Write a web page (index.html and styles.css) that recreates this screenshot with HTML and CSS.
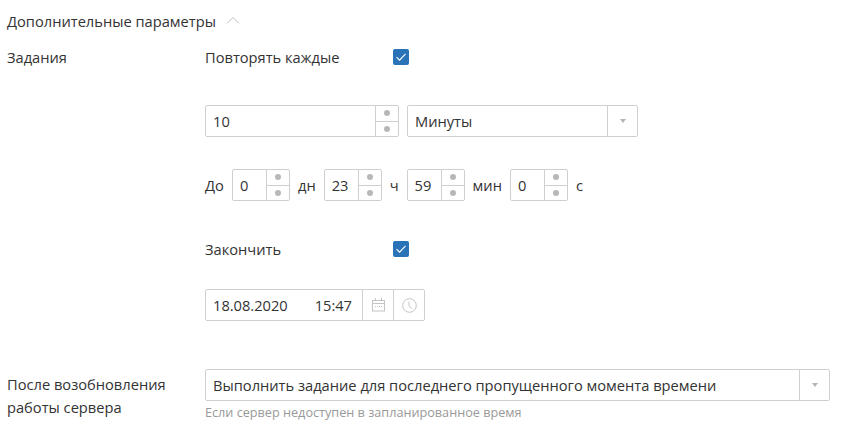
FILE: index.html
```html
<!DOCTYPE html>
<html lang="ru">
<head>
<meta charset="utf-8">
<title>Дополнительные параметры</title>
<link rel="stylesheet" href="styles.css">
</head>
<body>
<div class="section-head">
  <span>Дополнительные параметры</span>
  <svg class="chevron" width="14" height="8" viewBox="0 0 14 8"><path d="M1 7.5 7 1.5l6 6" fill="none" stroke="#bdbdbd" stroke-width="1"/></svg>
</div>
<div class="form-row tasks">
  <div class="label">Задания</div>
  <div class="fields">
    <div class="check-row">
      <span class="check-label">Повторять каждые</span>
      <span class="checkbox"><svg width="16" height="16" viewBox="0 0 16 16"><path d="M3.5 8.2 6.6 11.2 12.5 4.8" fill="none" stroke="#fff" stroke-width="1.1"/></svg></span>
    </div>
    <div class="repeat-row">
      <div class="box spin spin-wide"><span class="val">10</span><span class="arrows"><span class="arrow"><i></i></span><span class="arrow"><i></i></span></span></div>
      <div class="box select select-unit"><span class="val">Минуты</span><span class="caret"><i></i></span></div>
    </div>
    <div class="until-row">
      <span class="unit-first">До</span>
      <div class="box spin spin-small"><span class="val">0</span><span class="arrows"><span class="arrow"><i></i></span><span class="arrow"><i></i></span></span></div>
      <span class="unit">дн</span>
      <div class="box spin spin-small"><span class="val">23</span><span class="arrows"><span class="arrow"><i></i></span><span class="arrow"><i></i></span></span></div>
      <span class="unit">ч</span>
      <div class="box spin spin-small"><span class="val">59</span><span class="arrows"><span class="arrow"><i></i></span><span class="arrow"><i></i></span></span></div>
      <span class="unit">мин</span>
      <div class="box spin spin-small"><span class="val">0</span><span class="arrows"><span class="arrow"><i></i></span><span class="arrow"><i></i></span></span></div>
      <span class="unit">с</span>
    </div>
    <div class="check-row finish">
      <span class="check-label">Закончить</span>
      <span class="checkbox"><svg width="16" height="16" viewBox="0 0 16 16"><path d="M3.5 8.2 6.6 11.2 12.5 4.8" fill="none" stroke="#fff" stroke-width="1.1"/></svg></span>
    </div>
    <div class="box datetime">
      <span class="date">18.08.2020</span><span class="time">15:47</span>
      <span class="dt-btn"><svg width="13" height="14" viewBox="0 0 13 14" fill="none" stroke="#c4c4c4"><rect x=".5" y="2.5" width="12" height="10.5"/><path d="M.5 5.5h12M3.5 0v3M9.5 0v3"/><path d="M3 8.5h7" stroke-dasharray="1 1"/></svg></span>
      <span class="dt-btn"><svg width="15" height="15" viewBox="0 0 15 15" fill="none" stroke="#c4c4c4"><circle cx="7.5" cy="7.5" r="6.8"/><path d="M7 3.5V8L10 10.5"/></svg></span>
    </div>
  </div>
</div>
<div class="form-row resume">
  <div class="label two-line">После возобновления работы сервера</div>
  <div class="fields">
    <div class="box select select-full"><span class="val">Выполнить задание для последнего пропущенного момента времени</span><span class="caret"><i></i></span></div>
    <div class="hint">Если сервер недоступен в запланированное время</div>
  </div>
</div>
</body>
</html>
```
FILE: styles.css
```css
* { box-sizing: border-box; }
html, body { margin: 0; padding: 0; background: #fff; }
body {
  width: 845px;
  height: 441px;
  overflow: hidden;
  padding: 11px 0 0 7px;
  font-family: "Open Sans", sans-serif;
  font-size: 14.67px;
  line-height: 20px;
  color: #333;
}
.section-head { display: flex; align-items: center; gap: 10px; height: 20px; }
.chevron { margin-top: -3px; }
.form-row { display: flex; }
.label { width: 198px; flex: none; }
.tasks { margin-top: 16px; }
.fields { display: flex; flex-direction: column; }
.check-row { display: flex; align-items: center; height: 20px; }
.check-label { width: 188px; }
.checkbox {
  width: 16px; height: 16px;
  background: #2b73b7;
  border-radius: 2px;
  display: block;
}
.checkbox svg { display: block; }
.box {
  display: flex;
  height: 32px;
  border: 1px solid #cfcfcf;
  border-radius: 2px;
  background: #fff;
  align-items: stretch;
}
.val { flex: 1; padding-left: 7px; line-height: 31px; white-space: nowrap; }
.repeat-row { display: flex; gap: 8px; margin-top: 38px; }
.spin-wide { width: 194px; }
.select-unit { width: 231px; }
.arrows { width: 23px; flex: none; display: flex; flex-direction: column; border-left: 1px solid #cfcfcf; }
.arrow { flex: 1; display: flex; align-items: center; justify-content: center; }
.arrow + .arrow { border-top: 1px solid #cfcfcf; }
.arrow i { width: 6px; height: 6px; border-radius: 50%; background: #b8b8b8; display: block; }
.caret { width: 30px; flex: none; border-left: 1px solid #cfcfcf; display: flex; align-items: center; justify-content: center; }
.caret i { width: 0; height: 0; border-left: 3.5px solid transparent; border-right: 3.5px solid transparent; border-top: 4px solid #b5b5b5; display: block; }
.until-row { display: flex; align-items: center; margin-top: 32px; }
.unit-first { width: 27px; }
.spin-small { width: 58px; }
.unit { padding: 0 8px; }
.finish { margin-top: 38px; }
.datetime { width: 220px; margin-top: 30px; }
.date { flex: 1; padding-left: 7px; line-height: 31px; }
.time { flex: none; padding-right: 10px; line-height: 31px; }
.dt-btn { width: 31px; flex: none; border-left: 1px solid #cfcfcf; display: flex; align-items: center; justify-content: center; }
.resume { margin-top: 48px; }
.two-line { line-height: 23px; padding-top: 4px; padding-right: 20px; }
.select-full { width: 625px; }
.hint { font-size: 12.67px; line-height: 16px; color: #999; margin-top: 3px; }
```
